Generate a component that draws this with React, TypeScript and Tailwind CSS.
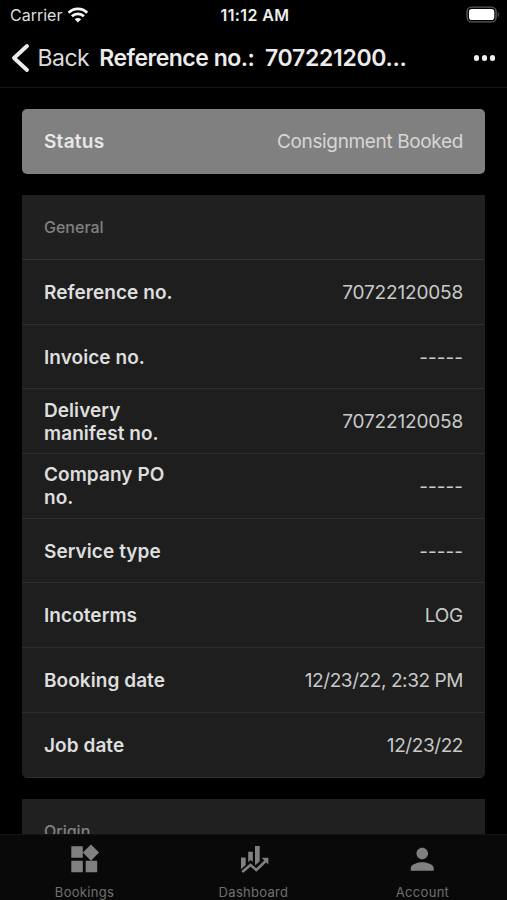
import { MdPerson, MdWidgets } from 'react-icons/md'

const rows = [
  { label: 'Reference no.', value: '70722120058', track: 'tracking-[-0.17px]' },
  { label: 'Invoice no.', value: '-----', track: 'tracking-[0px]' },
  { label: 'Delivery manifest no.', value: '70722120058', track: 'tracking-[-0.17px]' },
  { label: 'Company PO no.', value: '-----', track: 'tracking-[0px]' },
  { label: 'Service type', value: '-----', track: 'tracking-[0px]' },
  { label: 'Incoterms', value: 'LOG', track: 'tracking-[-0.2px]' },
  { label: 'Booking date', value: '12/23/22, 2:32 PM', track: 'tracking-[-0.42px]' },
  { label: 'Job date', value: '12/23/22', track: 'tracking-[-0.42px]' },
]

function WifiIcon() {
  return (
    <svg width="22" height="16" viewBox="0 0 22 16" fill="none" stroke="#f4f4f4" strokeWidth="2.8">
      <path d="M1.6 5.7a13.2 13.2 0 0 1 18.6 0" />
      <path d="M4.9 9.3a8.5 8.5 0 0 1 12 0" />
      <path d="M7.7 12.2a4.6 4.6 0 0 1 6.4 0L10.9 15.5z" fill="#f4f4f4" stroke="none" />
    </svg>
  )
}

function BatteryIcon() {
  return (
    <svg width="34" height="18" viewBox="0 0 34 18">
      <rect x="1.1" y="1.1" width="29" height="14.8" rx="4.6" fill="none" stroke="#5c5c5c" strokeWidth="1.4" />
      <rect x="3" y="3" width="25.3" height="11" rx="2.8" fill="#fff" />
      <path d="M31.8 6v5c1.5-.5 1.5-4.5 0-5z" fill="#5c5c5c" />
    </svg>
  )
}

function FinanceIcon() {
  return (
    <svg className="ml-[3px]" width="28" height="28" viewBox="0 0 28 28" fill="#808080">
      <path d="M0 11.5h4.7v7.6L0 23.3z" />
      <path d="M7.2 5.7h4.6v10.2L9.6 14l-2.4 2.2z" />
      <path d="M14 0h4.7v15.2L14.6 19l-.6-.5z" />
      <path d="M1.2 26.1 9.5 18.9l5.8 5L25 14.8" fill="none" stroke="#808080" strokeWidth="2.6" />
      <path d="M20.6 11.8H27.4v6.8z" />
    </svg>
  )
}

export default function App() {
  return (
    <div className="flex h-[900px] w-[507px] flex-col overflow-hidden bg-black font-['Inter','Liberation_Sans',sans-serif]">
      <header className="h-[88px] shrink-0 border-b border-[#161616]">
        <div className="grid h-[30px] grid-cols-3 items-center pl-2.5 pr-[7px]">
          <div className="flex items-center gap-[5px]">
            <span className="text-[16px] leading-5 text-[#dedede]">Carrier</span>
            <WifiIcon />
          </div>
          <span className="text-center text-[16px] font-semibold leading-5 tracking-[0.4px] text-[#eeeeee]">11:12 AM</span>
          <div className="flex justify-end">
            <BatteryIcon />
          </div>
        </div>
        <div className="flex h-[56px] items-center pl-[11px] pr-3">
          <svg width="19" height="30" viewBox="0 0 19 30" fill="none" stroke="#ececec" strokeWidth="3.9" strokeLinecap="round" strokeLinejoin="round">
            <path d="M16 3 3 15l13 12" />
          </svg>
          <span className="ml-[7.5px] text-[23px] tracking-[-0.5px] text-[#dcdcdc]">Back</span>
          <h1 className="ml-[10px] flex-1 whitespace-pre text-[23px] font-semibold tracking-[-0.5px] text-[#ececec]">
            Reference no.:{'  '}
            <span className="tracking-[-0.3px]">707221200...</span>
          </h1>
          <div className="flex gap-[2.5px]">
            <i className="size-[5.5px] rounded-full bg-[#f0f0f0]" />
            <i className="size-[5.5px] rounded-full bg-[#f0f0f0]" />
            <i className="size-[5.5px] rounded-full bg-[#f0f0f0]" />
          </div>
        </div>
      </header>

      <main className="min-h-0 flex-1 overflow-hidden px-[22px] pt-[21px] text-[19px] leading-[23px]">
        <section className="flex h-[65px] items-center justify-between rounded-[5px] bg-[#808080] px-[22px]">
          <span className="font-semibold tracking-[0.25px] text-[#e8e8e8]">Status</span>
          <span className="tracking-[-0.36px] text-[#d6d6d6]">Consignment Booked</span>
        </section>

        <section className="mt-[21px] h-[582.5px] overflow-hidden rounded-b-[5px] bg-[#1e1e1e]">
          <h2 className="flex h-[65px] items-center border-b border-[#343434] bg-[#202020] px-[22px] pt-px text-[16px] font-medium text-[#828282]">
            General
          </h2>
          {rows.map((row) => (
            <div key={row.label} className="flex h-[64.7px] items-center justify-between border-b border-[#2e2e2e] px-[22px] pt-px">
              <span className="w-[140px] font-semibold tracking-[0.06px] text-[#dedede]">{row.label}</span>
              <span className={`text-[#c9c9c9] ${row.track}`}>{row.value}</span>
            </div>
          ))}
        </section>

        <section className="mt-[21px] h-[120px] bg-[#202020]">
          <h2 className="flex h-[65px] items-center px-[22px] pt-px text-[16px] font-medium text-[#828282]">Origin</h2>
        </section>
      </main>

      <nav className="grid h-[66px] shrink-0 grid-cols-3 border-t border-[#141414] bg-[#090909] text-[13px] leading-4 tracking-[0.3px] text-[#707070]">
        <div className="flex flex-col items-center pt-[6.5px]">
          <MdWidgets size={34.5} color="#808080" />
          <span className="mt-2">Bookings</span>
        </div>
        <div className="flex flex-col items-center pt-[11px]">
          <FinanceIcon />
          <span className="mt-2.5">Dashboard</span>
        </div>
        <div className="flex flex-col items-center pt-[6.5px]">
          <MdPerson size={34.5} color="#808080" />
          <span className="mt-2">Account</span>
        </div>
      </nav>
    </div>
  )
}
